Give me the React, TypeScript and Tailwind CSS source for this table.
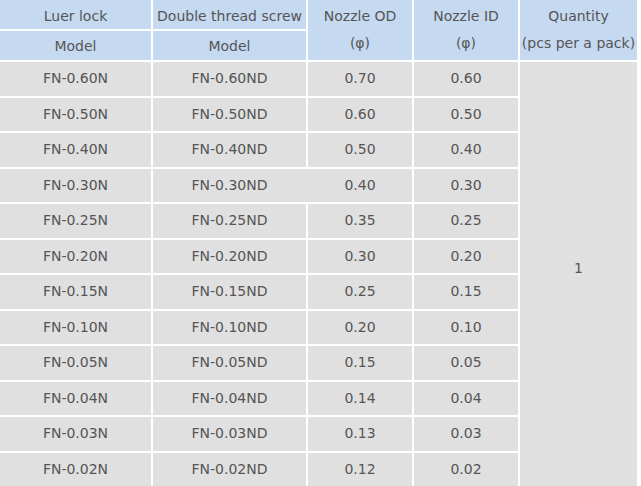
// Nozzle spec table: luer lock / double thread models with OD / ID sizes.

const ROWS: [string, string, string, string][] = [
  ["FN-0.60N", "FN-0.60ND", "0.70", "0.60"],
  ["FN-0.50N", "FN-0.50ND", "0.60", "0.50"],
  ["FN-0.40N", "FN-0.40ND", "0.50", "0.40"],
  ["FN-0.30N", "FN-0.30ND", "0.40", "0.30"],
  ["FN-0.25N", "FN-0.25ND", "0.35", "0.25"],
  ["FN-0.20N", "FN-0.20ND", "0.30", "0.20"],
  ["FN-0.15N", "FN-0.15ND", "0.25", "0.15"],
  ["FN-0.10N", "FN-0.10ND", "0.20", "0.10"],
  ["FN-0.05N", "FN-0.05ND", "0.15", "0.05"],
  ["FN-0.04N", "FN-0.04ND", "0.14", "0.04"],
  ["FN-0.03N", "FN-0.03ND", "0.13", "0.03"],
  ["FN-0.02N", "FN-0.02ND", "0.12", "0.02"],
];

const head = "flex items-center justify-center bg-[#c5d9f1]";
const cell = "flex items-center justify-center bg-[#e0e0e0]";

export default function App() {
  return (
    <div className="w-[641px] h-[486px] overflow-hidden bg-white font-['DejaVu_Sans',sans-serif] text-[14px] text-[#555555]">
      <div className="grid grid-cols-[151px_153px_104px_104px_117px] grid-rows-[29px_29px_repeat(12,33.5px)] gap-[2px]">
        {/* Header */}
        <div className={`${head} pt-[4px]`}>Luer lock</div>
        <div className={`${head} pt-[4px]`}>Double thread screw</div>
        <div className={`${head} row-span-2 flex-col leading-[27px]`}>
          <span>Nozzle OD</span>
          <span>(φ)</span>
        </div>
        <div className={`${head} row-span-2 flex-col leading-[27px]`}>
          <span>Nozzle ID</span>
          <span>(φ)</span>
        </div>
        <div className={`${head} row-span-2 flex-col leading-[27px] whitespace-nowrap`}>
          <span>Quantity</span>
          <span>(pcs per a pack)</span>
        </div>
        <div className={`${head} pt-[2px]`}>Model</div>
        <div className={`${head} pt-[2px]`}>Model</div>

        {/* Data rows */}
        {ROWS.map((r, i) => {
          const qty =
            i === 0 ? (
              <div key="qty" className={`${cell} row-span-12 col-start-5 row-start-3 pb-3`}>
                1
              </div>
            ) : null;

          // row 4 has no divider between the model and OD cells
          if (i === 3) {
            return [
              <div key={`a${i}`} className={cell}>{r[0]}</div>,
              <div key={`b${i}`} className="col-span-2 grid grid-cols-[153px_2px_104px] bg-[#e0e0e0]">
                <div className="flex items-center justify-center">{r[1]}</div>
                <div />
                <div className="flex items-center justify-center">{r[2]}</div>
              </div>,
              <div key={`d${i}`} className={cell}>{r[3]}</div>,
            ];
          }

          return [
            <div key={`a${i}`} className={cell}>{r[0]}</div>,
            <div key={`b${i}`} className={cell}>{r[1]}</div>,
            <div key={`c${i}`} className={cell}>{r[2]}</div>,
            <div key={`d${i}`} className={cell}>{r[3]}</div>,
            qty,
          ];
        })}
      </div>
    </div>
  );
}
